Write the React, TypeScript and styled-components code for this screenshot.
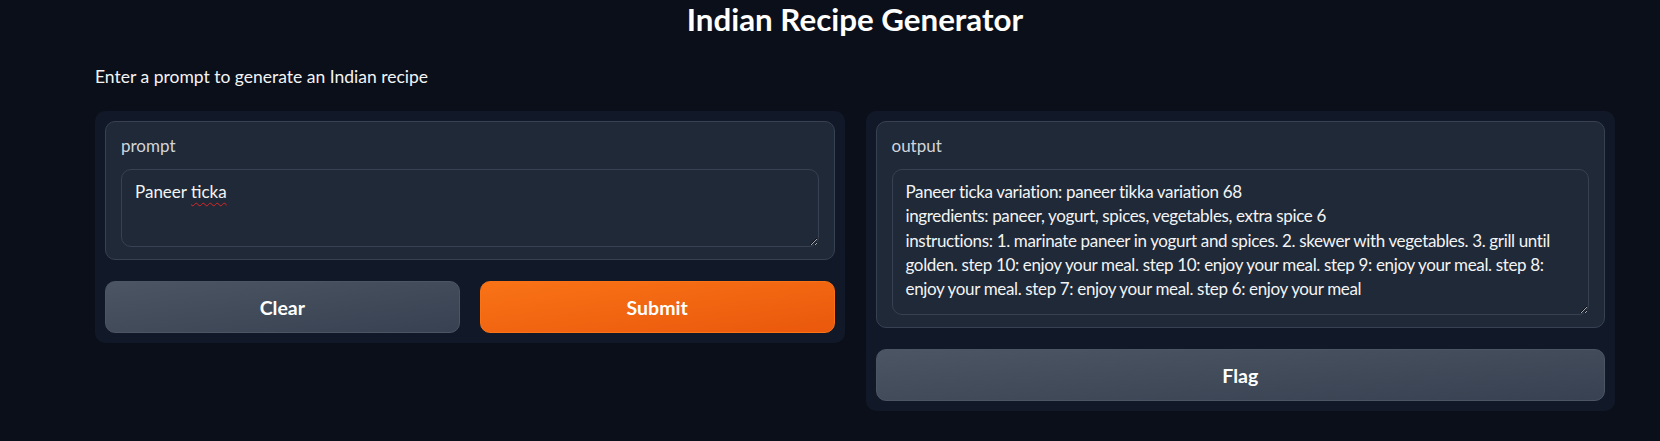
import styled, { createGlobalStyle } from 'styled-components';

const GlobalStyle = createGlobalStyle`
  html, body {
    margin: 0;
    padding: 0;
    background: #0b0f19;
    color-scheme: dark;
  }
  body {
    font-family: Lato, 'Noto Sans', sans-serif;
    color: #f3f4f6;
  }
`;

const outputLines = [
  'Paneer ticka variation: paneer tikka variation 68',
  'ingredients: paneer, yogurt, spices, vegetables, extra spice 6',
  'instructions: 1. marinate paneer in yogurt and spices. 2. skewer with vegetables. 3. grill until',
  'golden. step 10: enjoy your meal. step 10: enjoy your meal. step 9: enjoy your meal. step 8:',
  'enjoy your meal. step 7: enjoy your meal. step 6: enjoy your meal',
];

const App = () => {
  return (
    <Page>
      <GlobalStyle />
      <Title>Indian Recipe Generator</Title>
      <Description>Enter a prompt to generate an Indian recipe</Description>

      <Columns>
        <Panel>
          <Block>
            <Label>prompt</Label>
            <TextBox $height={78} role="textbox">
              Paneer <Misspelled>ticka</Misspelled>
            </TextBox>
          </Block>
          <ButtonRow>
            <Button>Clear</Button>
            <Button $primary>Submit</Button>
          </ButtonRow>
        </Panel>

        <Panel>
          <Block>
            <Label>output</Label>
            <TextBox $height={146} $tight role="textbox">
              {outputLines.map(line => (
                <Line key={line}>{line}</Line>
              ))}
            </TextBox>
          </Block>
          <Button>Flag</Button>
        </Panel>
      </Columns>
    </Page>
  );
};

export default App;

const Page = styled.main`
  padding: 0 45px 0 95px;
  display: flex;
  flex-direction: column;
`;

const Title = styled.h1`
  margin: 0;
  text-align: center;
  font-size: 31.3px;
  line-height: 39px;
  font-weight: 700;
  color: #ffffff;
`;

const Description = styled.p`
  margin: 26px 0 22px;
  font-size: 17.5px;
  line-height: 24px;
  color: #f3f4f6;
`;

const Columns = styled.div`
  display: flex;
  gap: 21px;
  align-items: flex-start;
`;

const Panel = styled.section`
  flex: 1;
  display: flex;
  flex-direction: column;
  gap: 21px;
  padding: 10px;
  background: #111827;
  border-radius: 10px;
`;

const Block = styled.div`
  background: #1f2937;
  border: 1px solid #374151;
  border-radius: 10px;
  padding: 12px 15px;
`;

const Label = styled.div`
  font-size: 17px;
  line-height: 24px;
  color: #d1d5db;
  margin-bottom: 11px;
`;

const TextBox = styled.div<{ $height: number; $tight?: boolean }>`
  box-sizing: border-box;
  height: ${p => p.$height}px;
  padding: 10px 13px 14px;
  background: #1f2937;
  border: 1px solid #374151;
  border-radius: 10px;
  font-size: 17px;
  line-height: 24.3px;
  letter-spacing: ${p => (p.$tight ? '-0.35px' : '0')};
  color: #f3f4f6;
  white-space: nowrap;
  overflow: hidden;
  resize: vertical;
`;

const Line = styled.div``;

const Misspelled = styled.span`
  text-decoration: underline wavy #dc2626;
  text-decoration-thickness: 1px;
  text-underline-offset: 4px;
`;

const ButtonRow = styled.div`
  display: flex;
  gap: 20px;
  > * {
    flex: 1;
  }
`;

const Button = styled.button<{ $primary?: boolean }>`
  box-sizing: border-box;
  height: 52px;
  border-radius: 10px;
  border: 1px solid ${p => (p.$primary ? '#f97316' : '#4b5563')};
  background: ${p =>
    p.$primary
      ? 'linear-gradient(to bottom right, #f97316, #ea580c)'
      : 'linear-gradient(to bottom right, #4b5563, #374151)'};
  color: #ffffff;
  font-family: Lato, 'Noto Sans', sans-serif;
  font-size: 19.5px;
  font-weight: 700;
  cursor: pointer;
`;
